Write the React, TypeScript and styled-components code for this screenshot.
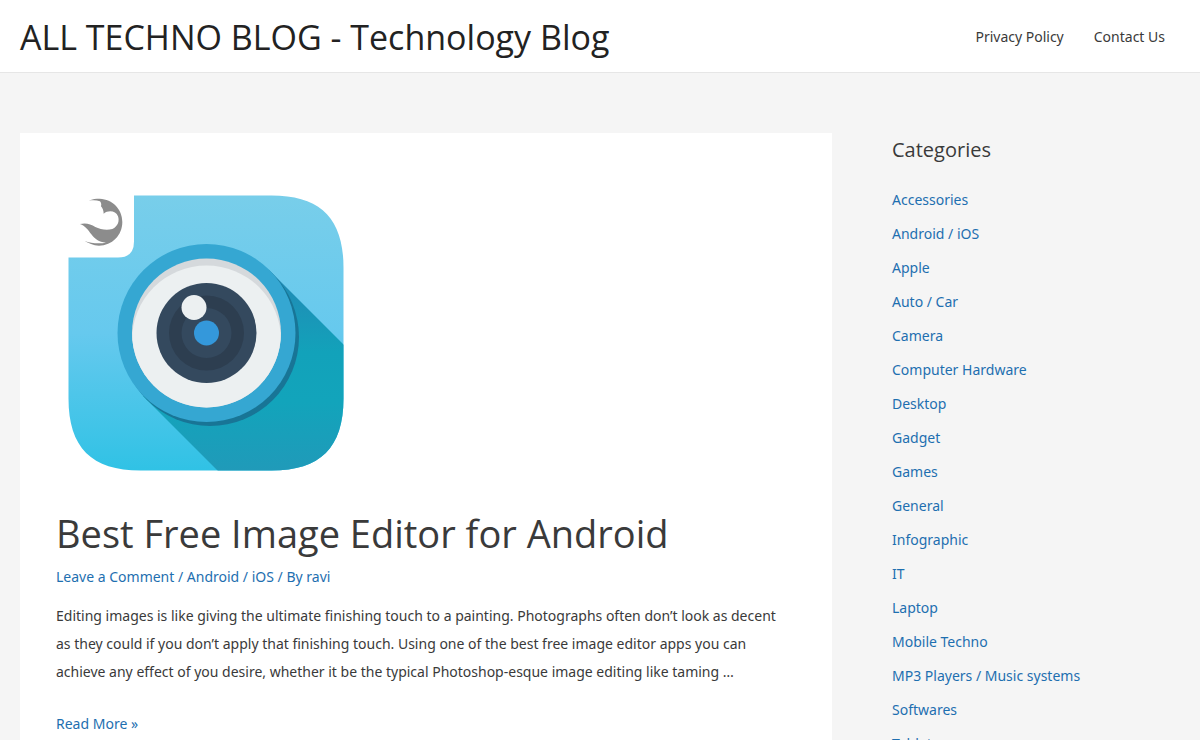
import React from "react";
import styled, { createGlobalStyle } from "styled-components";

const GlobalStyle = createGlobalStyle`
  *, *::before, *::after { box-sizing: border-box; }
  body {
    margin: 0;
    background: #f5f5f5;
    color: #3a3a3a;
    font-family: "Noto Sans", "Open Sans", sans-serif;
    font-size: 14px;
    line-height: 28px;
  }
`;

const Link = styled.a`
  color: #1e6fb0;
  text-decoration: none;
  &:hover { color: #3a3a3a; }
`;

const Header = styled.header`
  display: flex;
  align-items: center;
  justify-content: space-between;
  height: 73px;
  padding: 2px 20px 0;
  background: #fff;
  border-bottom: 1px solid #e6e6e6;
`;

const SiteTitle = styled.h1`
  margin: 0;
  font-family: "Open Sans", sans-serif;
  font-size: 34px;
  line-height: 44px;
  font-weight: 400;
`;

const TitleLink = styled(Link)`
  color: #222;
`;

const Nav = styled.nav`
  display: flex;
  gap: 30px;
  padding-right: 15px;
`;

const NavLink = styled(Link)`
  color: #3a3a3a;
`;

const Container = styled.div`
  display: flex;
  align-items: flex-start;
  padding: 60px 20px;
`;

const Card = styled.main`
  width: 70%;
  padding: 50px 36px;
  background: #fff;
`;

const Picture = styled.svg`
  display: block;
  width: 300px;
  height: 300px;
`;

const PostTitle = styled.h2`
  margin: 24px 0 4px;
  font-family: "Open Sans", sans-serif;
  font-size: 38px;
  line-height: 52px;
  font-weight: 400;
`;

const Meta = styled.div`
  margin-bottom: 11px;
  color: #1e6fb0;
`;

const Excerpt = styled.p`
  margin: 0 0 24px;
  padding-right: 8px;
`;

const Sidebar = styled.aside`
  width: 30%;
  padding-left: 60px;
`;

const WidgetTitle = styled.h2`
  margin: 0 0 16px;
  font-family: "Open Sans", sans-serif;
  font-size: 20px;
  line-height: 34px;
  font-weight: 400;
`;

const CategoryList = styled.ul`
  margin: 0;
  padding: 0;
  list-style: none;
`;

const Category = styled.li`
  line-height: 34px;
`;

const categories = [
  "Accessories", "Android / iOS", "Apple", "Auto / Car", "Camera", "Computer Hardware",
  "Desktop", "Gadget", "Games", "General", "Infographic", "IT", "Laptop", "Mobile Techno",
  "MP3 Players / Music systems", "Softwares", "Tablets",
];

const bodyPath =
  "M78 12.5H215.5C264.5 12.5 287.5 35.5 287.5 84.5V215.5C287.5 264.5 264.5 287.5 215.5 287.5H84.5C35.5 287.5 12.5 264.5 12.5 215.5V74.5H62Q78 74.5 78 58.5Z";

function CameraPicture() {
  return (
    <Picture viewBox="0 0 300 300" role="img" aria-label="Camera lens app icon">
      <defs>
        <linearGradient id="sky" x1="0" y1="0" x2="0" y2="1">
          <stop offset="0" stopColor="#78ceea" />
          <stop offset="0.5" stopColor="#66c9ee" />
          <stop offset="1" stopColor="#30c2e5" />
        </linearGradient>
        <linearGradient id="shade" gradientUnits="userSpaceOnUse" x1="0" y1="90" x2="0" y2="288">
          <stop offset="0" stopColor="#2389b5" />
          <stop offset="0.4" stopColor="#12a2ba" />
          <stop offset="0.65" stopColor="#12a4bb" />
          <stop offset="1" stopColor="#209ab9" />
        </linearGradient>
        <clipPath id="body"><path d={bodyPath} /></clipPath>
        <clipPath id="rim"><circle cx="150.5" cy="150" r="74.5" /></clipPath>
      </defs>
      <path d={bodyPath} fill="url(#sky)" />
      <g clipPath="url(#body)">
        <path d="M213 87L300 174V300H174L87 213Z" fill="url(#shade)" />
      </g>
      <circle cx="154" cy="154" r="89" fill="#187596" />
      <circle cx="150.5" cy="150" r="89" fill="#35a7d2" />
      <circle cx="150.5" cy="150" r="74.5" fill="#d5d9dc" />
      <circle cx="150.5" cy="157" r="74.5" fill="#ecf0f1" clipPath="url(#rim)" />
      <circle cx="150.5" cy="150" r="50" fill="#34495e" />
      <circle cx="150.5" cy="150" r="37.5" fill="#2d3e50" />
      <circle cx="150.5" cy="150" r="25" fill="#34495e" />
      <circle cx="150.5" cy="150" r="12.5" fill="#3498db" />
      <circle cx="138" cy="124.5" r="12.5" fill="#ecf0f1" />
      <path
        transform="translate(4 2) scale(0.3333)"
        fill="#8c8c8c"
        d="M86 47C98 42 108 41 119 41C158 43 187 72 187 111C187 151 156 182 117 182C100 181 85 175 73 167C92 175 117 177 138 173C116 171 105 162 94 148C84 134 76 123 60 117C78 113 92 117 106 126C120 133 140 137 157 132C174 125 179 108 174 94C168 77 145 74 131 86C131 77 128 69 123 64C125 58 123 53 120 49C110 45 99 45 86 47Z"
      />
    </Picture>
  );
}

export default function App() {
  return (
    <>
      <GlobalStyle />
      <Header>
        <SiteTitle><TitleLink href="#">ALL TECHNO BLOG - Technology Blog</TitleLink></SiteTitle>
        <Nav>
          <NavLink href="#privacy">Privacy Policy</NavLink>
          <NavLink href="#contact">Contact Us</NavLink>
        </Nav>
      </Header>
      <Container>
        <Card>
          <CameraPicture />
          <PostTitle><NavLink href="#post">Best Free Image Editor for Android</NavLink></PostTitle>
          <Meta>
            <Link href="#comment">Leave a Comment</Link> / <Link href="#android">Android / iOS</Link> / By{" "}
            <Link href="#ravi">ravi</Link>
          </Meta>
          <Excerpt>
            Editing images is like giving the ultimate finishing touch to a painting. Photographs often don’t look as
            decent as they could if you don’t apply that finishing touch. Using one of the best free image editor apps
            you can achieve any effect of you desire, whether it be the typical Photoshop-esque image editing like
            taming …
          </Excerpt>
          <Link href="#more">Read More »</Link>
        </Card>
        <Sidebar>
          <WidgetTitle>Categories</WidgetTitle>
          <CategoryList>
            {categories.map((name) => (
              <Category key={name}><Link href="#category">{name}</Link></Category>
            ))}
          </CategoryList>
        </Sidebar>
      </Container>
    </>
  );
}
